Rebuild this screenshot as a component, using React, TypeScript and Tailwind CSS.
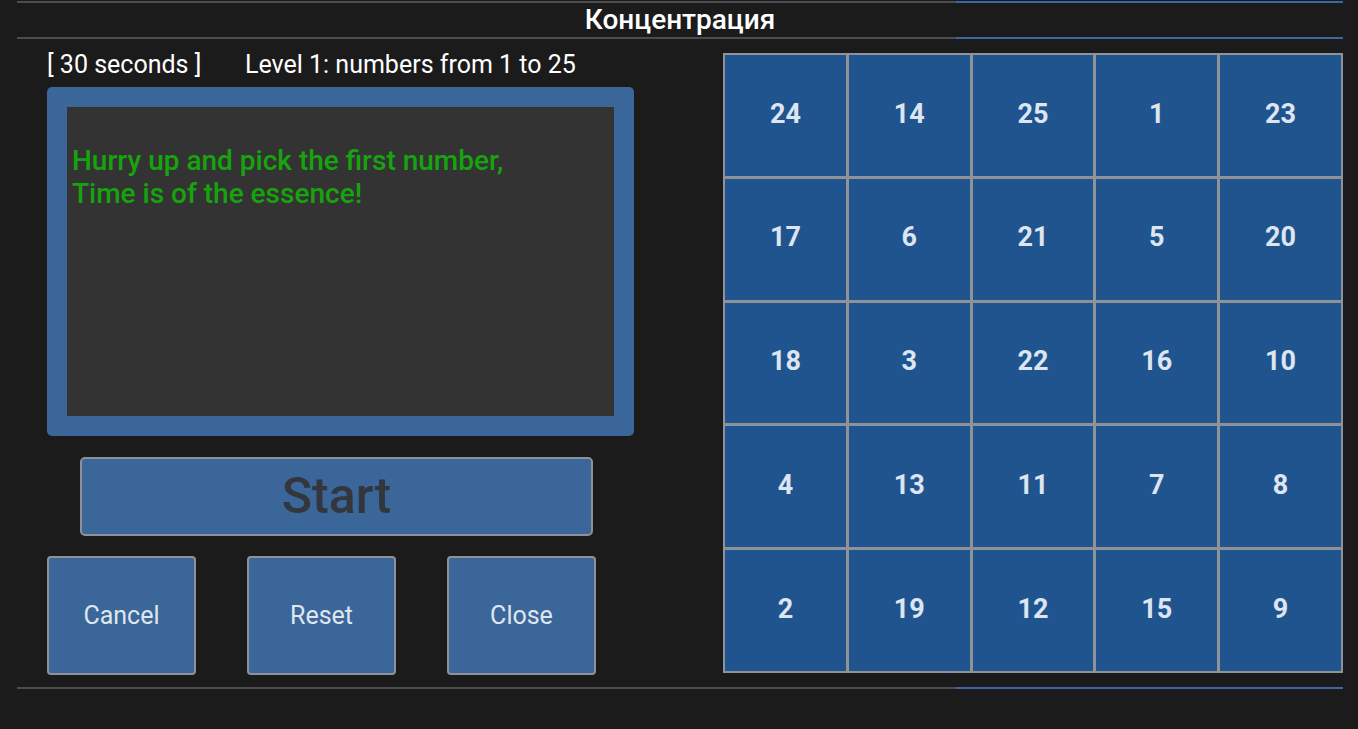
const grid: number[][] = [
  [24, 14, 25, 1, 23],
  [17, 6, 21, 5, 20],
  [18, 3, 22, 16, 10],
  [4, 13, 11, 7, 8],
  [2, 19, 12, 15, 9],
];

function Rule() {
  return (
    <div className="flex h-[2px] ml-[17px] w-[1326px]">
      <div className="w-[939px] bg-[#4a4c4f]" />
      <div className="flex-1 bg-[#3a68a3]" />
    </div>
  );
}

function SmallButton({ label }: { label: string }) {
  return (
    <button className="w-[149px] h-[119px] rounded-[4px] border-2 border-[#8e9196] bg-[#3a6699] text-[25px] text-[#dfe6ef]">
      {label}
    </button>
  );
}

export default function App() {
  return (
    <div className="h-[729px] w-[1358px] bg-[#1b1b1b] pt-[1px] font-['Roboto',sans-serif] overflow-hidden">
      <Rule />
      <div className="h-[34px] flex items-center justify-center text-[28px] font-medium text-white ml-[17px] w-[1326px]">
        Концентрация
      </div>
      <Rule />

      <div className="flex h-[648px]">
        <div className="ml-[47px] w-[590px] flex flex-col">
          <div className="flex h-[48px] items-center text-[25px] text-white pt-[3px]">
            <span className="w-[198px]">[ 30 seconds ]</span>
            <span>Level 1: numbers from 1 to 25</span>
          </div>

          <div className="w-[587px] h-[349px] rounded-[5px] bg-[#3a6699] p-[20px]">
            <div className="h-full bg-[#333333] pl-[5px] pt-[37px] text-[28px] font-medium leading-[33px] text-[#16a30e]">
              <div>Hurry up and pick the first number,</div>
              <div>Time is of the essence!</div>
            </div>
          </div>

          <button className="mt-[21px] ml-[33px] w-[513px] h-[79px] rounded-[5px] border-2 border-[#8e9196] bg-[#3a6699] text-[50px] font-medium text-[#33373d]">
            Start
          </button>

          <div className="mt-[20px] flex gap-[51px]">
            <SmallButton label="Cancel" />
            <SmallButton label="Reset" />
            <SmallButton label="Close" />
          </div>
        </div>

        <div className="ml-[86px] mt-[14px] w-[620px] h-[620px] grid grid-cols-5 grid-rows-5 gap-[3px] p-[2px] bg-[#8f9296]">
          {grid.flat().map((n) => (
            <div
              key={n}
              className="flex items-center justify-center pb-[3px] bg-[#20548f] text-[27px] font-bold text-[#dde5f0]"
            >
              {n}
            </div>
          ))}
        </div>
      </div>

      <Rule />
    </div>
  );
}
